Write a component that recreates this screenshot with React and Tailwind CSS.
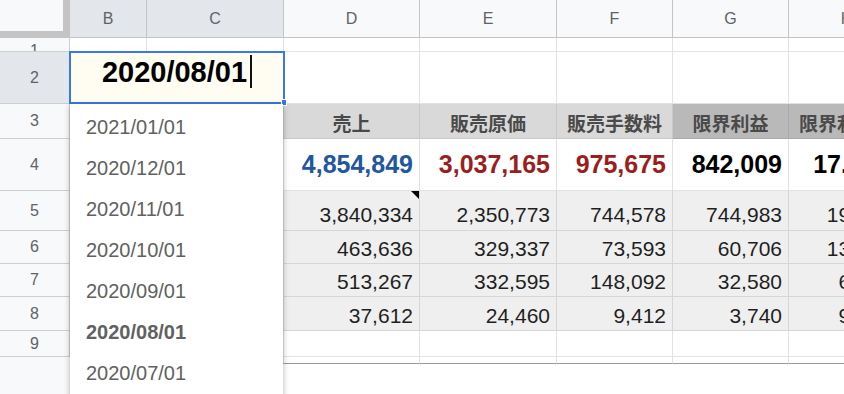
import React from "react";

const W = ["w-[77px]", "w-[137px]", "w-[136px]", "w-[137px]", "w-[116px]", "w-[116px]", "w-[116px]"];
const LETTERS = ["B", "C", "D", "E", "F", "G", "H"];

function RowHead({ h, label, selected, clip }) {
  return (
    <div
      className={`w-[70px] ${h} shrink-0 border-r border-b border-[#cfcfcf] ${selected ? "bg-[#e3e6ea]" : "bg-[#f8f9fa]"} flex justify-center overflow-hidden text-[16px] leading-none text-[#5f6368] ${clip ? "items-start pt-[5px]" : "items-center"}`}
    >
      {label}
    </div>
  );
}

const numRows = [
  { n: "5", h: "h-[40px]", pad: "pb-[5px]", vals: ["3,840,334", "2,350,773", "744,578", "744,983", "19.40%"], tri: true },
  { n: "6", h: "h-[33px]", pad: "pb-[4px]", vals: ["463,636", "329,337", "73,593", "60,706", "13.09%"] },
  { n: "7", h: "h-[33px]", pad: "pb-[4px]", vals: ["513,267", "332,595", "148,092", "32,580", "6.35%"] },
  { n: "8", h: "h-[34px]", pad: "pb-[4px]", vals: ["37,612", "24,460", "9,412", "3,740", "9.94%"] },
];

export default function App() {
  return (
    <div className="relative w-[844px] h-[394px] overflow-hidden bg-white font-['Liberation_Sans',Arial,sans-serif]">
      <div className="flex flex-col w-[905px]">
        {/* column header */}
        <div className="flex h-[38px]">
          <div className="w-[70px] shrink-0 bg-[#f8f9fa] border-r-[7px] border-b-[7px] border-[#c4c4c4]" />
          {LETTERS.map((l, i) => (
            <div
              key={l}
              className={`${W[i]} shrink-0 flex items-center justify-center border-r border-b border-[#c4c4c4] ${i < 2 ? "bg-[#e3e6ea]" : "bg-[#f8f9fa]"} text-[16px] leading-none text-[#5f6368]`}
            >
              {l}
            </div>
          ))}
        </div>

        {/* row 1 */}
        <div className="flex h-[14px]">
          <RowHead h="h-[14px]" label="1" clip />
          {W.map((w, i) => (
            <div key={i} className={`${w} shrink-0 border-r border-b border-[#e2e2e2]`} />
          ))}
        </div>

        {/* row 2 */}
        <div className="flex h-[52px]">
          <RowHead h="h-[52px]" label="2" selected />
          <div className="w-[214px] shrink-0 border-r border-b border-[#e2e2e2] bg-[#fffdf2]" />
          {W.slice(2).map((w, i) => (
            <div key={i} className={`${w} shrink-0 border-r border-b border-[#e2e2e2]`} />
          ))}
        </div>

        {/* row 3 */}
        <div className="flex h-[35px]">
          <RowHead h="h-[35px]" label="3" />
          <div className="w-[77px] shrink-0 border-r border-b border-[#c9c9c9] bg-[#d9d9d9]" />
          <div className="w-[137px] shrink-0 border-r border-b border-[#c9c9c9] bg-[#d9d9d9]" />
          {["売上", "販売原価", "販売手数料", "限界利益", "限界利益率"].map((t, i) => (
            <div
              key={t}
              className={`${W[i + 2]} shrink-0 flex items-center justify-center pt-[3px] border-r border-b ${i >= 3 ? "bg-[#b9b9b9] border-[#a9a9a9]" : "bg-[#d9d9d9] border-[#c9c9c9]"} font-['Noto_Sans_CJK_JP',sans-serif] font-bold text-[19px] leading-none text-[#4a4a4a] whitespace-nowrap`}
            >
              {t}
            </div>
          ))}
        </div>

        {/* row 4 */}
        <div className="flex h-[52px]">
          <RowHead h="h-[52px]" label="4" />
          <div className="w-[77px] shrink-0 border-r border-b border-[#e2e2e2]" />
          <div className="w-[137px] shrink-0 border-r border-b border-[#e2e2e2]" />
          {[
            ["4,854,849", "text-[#22569f]"],
            ["3,037,165", "text-[#9a1e1e]"],
            ["975,675", "text-[#9a1e1e]"],
            ["842,009", "text-black"],
            ["17.34%", "text-black"],
          ].map(([v, c], i) => (
            <div
              key={v}
              className={`${W[i + 2]} shrink-0 flex items-center justify-end pr-[6px] border-r border-b border-[#e2e2e2] font-bold text-[25px] leading-none whitespace-nowrap ${c}`}
            >
              {v}
            </div>
          ))}
        </div>

        {/* rows 5-8 */}
        {numRows.map((r) => (
          <div key={r.n} className={`flex ${r.h}`}>
            <RowHead h={r.h} label={r.n} />
            <div className="w-[77px] shrink-0 border-r border-b border-[#d6d6d6] bg-[#efefef]" />
            <div className="w-[137px] shrink-0 border-r border-b border-[#d6d6d6] bg-[#efefef]" />
            {r.vals.map((v, i) => (
              <div
                key={i}
                className={`${W[i + 2]} relative shrink-0 flex items-end justify-end pr-[6px] ${r.pad} border-r border-b border-[#d6d6d6] bg-[#efefef] text-[21px] leading-none text-[#1f1f1f] whitespace-nowrap`}
              >
                {v}
                {r.tri && i === 0 && (
                  <svg className="absolute top-0 right-0" width="8" height="8" viewBox="0 0 8 8">
                    <polygon points="0,0 8,0 8,8" fill="#000" />
                  </svg>
                )}
              </div>
            ))}
          </div>
        ))}

        {/* row 9 */}
        <div className="flex h-[26px]">
          <RowHead h="h-[26px]" label="9" />
          {W.map((w, i) => (
            <div key={i} className={`${w} shrink-0 border-r border-b border-[#e2e2e2]`} />
          ))}
        </div>

        {/* row 10 (partial) */}
        <div className="flex h-[7px]">
          <div className="w-[70px] h-[7px] shrink-0 bg-[#f8f9fa]" />
          {W.map((w, i) => (
            <div key={i} className={`${w} shrink-0 border-r border-b border-r-[#e2e2e2] border-b-[#9a9a9a]`} />
          ))}
        </div>

        {/* remaining */}
        <div className="flex h-[40px]">
          <div className="w-[70px] h-[40px] shrink-0 bg-[#f8f9fa]" />
          <div className="flex-1 bg-white" />
        </div>
      </div>

      {/* cell editor */}
      <div className="absolute left-[69px] top-[51px] w-[216px] h-[53px] border-2 border-[#3b78e7] bg-[#fffdf2] flex justify-center items-start pt-[5px]">
        <span className="font-bold text-[29px] leading-none text-black whitespace-nowrap">2020/08/01</span>
        <span className="ml-[3px] -mt-[3px] w-[2px] h-[33px] bg-[#111]" />
      </div>
      <div className="absolute left-[281px] top-[99px] w-[6px] h-[7px] bg-[#3b78e7] border border-white" />

      {/* dropdown */}
      <div className="absolute left-[70px] top-[104px] w-[213px] h-[300px] bg-white shadow-[0_2px_6px_rgba(0,0,0,0.3)] pt-[2px] flex flex-col">
        {["2021/01/01", "2020/12/01", "2020/11/01", "2020/10/01", "2020/09/01", "2020/08/01", "2020/07/01"].map((d) => (
          <div
            key={d}
            className={`h-[41px] shrink-0 flex items-center pl-[16px] text-[20px] leading-none text-[#616161] ${d === "2020/08/01" ? "font-bold" : ""}`}
          >
            {d}
          </div>
        ))}
      </div>
    </div>
  );
}
